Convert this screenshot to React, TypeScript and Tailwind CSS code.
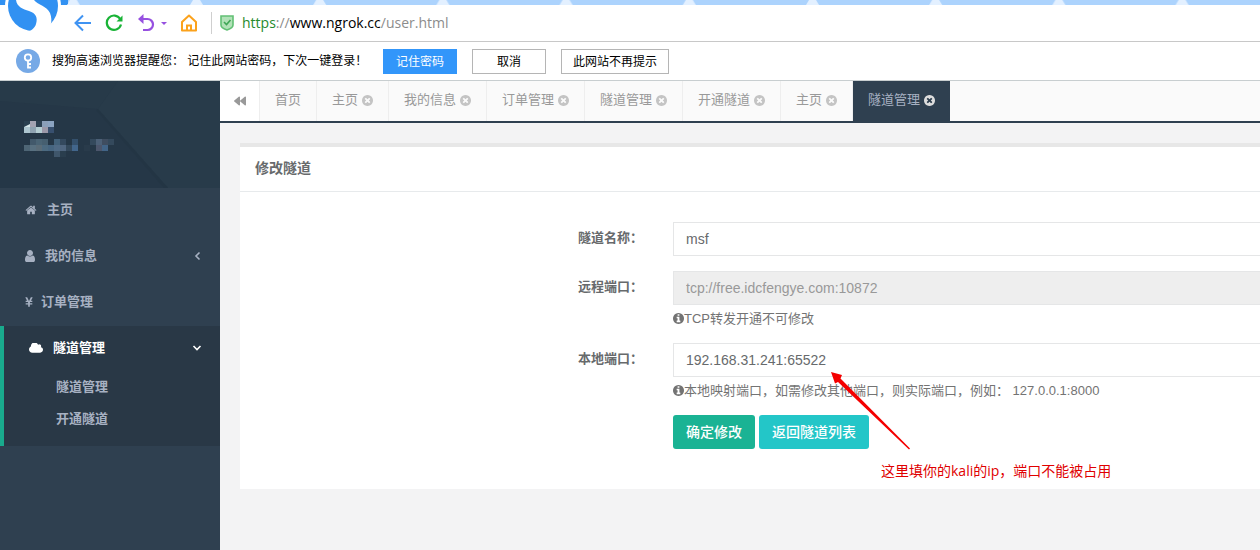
import React from 'react';
import { FaBackward, FaYenSign } from 'react-icons/fa';

const iconPaths = {
  home: 'M1472 992v480q0 26-19 45t-45 19h-384v-384h-256v384h-384q-26 0-45-19t-19-45v-480q0-1 .5-3t.5-3l575-474 575 474q1 2 1 6zm223-69l-62 74q-8 9-21 11h-3q-13 0-21-7l-692-577-692 577q-12 8-24 7-13-2-21-11l-62-74q-8-10-7-23.5t11-21.5l719-599q32-26 76-26t76 26l244 204v-195q0-14 9-23t23-9h192q14 0 23 9t9 23v408l219 182q10 8 11 21.5t-7 23.5z',
  user: 'M1536 1399q0 109-62.5 187t-150.5 78h-854q-88 0-150.5-78t-62.5-187q0-85 8.5-160.5t31.5-152 58.5-131 94-89 134.5-34.5q131 128 313 128t313-128q76 0 134.5 34.5t94 89 58.5 131 31.5 152 8.5 160.5zm-256-887q0 159-112.5 271.5t-271.5 112.5-271.5-112.5-112.5-271.5 112.5-271.5 271.5-112.5 271.5 112.5 112.5 271.5z',
  cloud: 'M1984 1152q0 159-112.5 271.5t-271.5 112.5h-1088q-185 0-316.5-131.5t-131.5-316.5q0-132 71-241.5t187-163.5q-2-28-2-43 0-212 150-362t362-150q158 0 286.5 88t187.5 230q70-62 166-62 106 0 181 75t75 181q0 75-41 138 129 30 213 134.5t84 239.5z',
  close: 'M1277 1122q0-26-19-45l-181-181 181-181q19-19 19-45 0-27-19-46l-90-90q-19-19-46-19-26 0-45 19l-181 181-181-181q-19-19-45-19-27 0-46 19l-90 90q-19 19-19 46 0 26 19 45l181 181-181 181q-19 19-19 45 0 27 19 46l90 90q19 19 46 19 26 0 45-19l181-181 181 181q19 19 45 19 27 0 46-19l90-90q19-19 19-46zm387-226q0 209-103 385.5t-279.5 279.5-385.5 103-385.5-103-279.5-279.5-103-385.5 103-385.5 279.5-279.5 385.5-103 385.5 103 279.5 279.5 103 385.5z',
  info: 'M1152 1376v-160q0-14-9-23t-23-9h-96v-512q0-14-9-23t-23-9h-320q-14 0-23 9t-9 23v160q0 14 9 23t23 9h96v320h-96q-14 0-23 9t-9 23v160q0 14 9 23t23 9h448q14 0 23-9t9-23zm-128-896v-160q0-14-9-23t-23-9h-192q-14 0-23 9t-9 23v160q0 14 9 23t23 9h192q14 0 23-9t9-23zm640 416q0 209-103 385.5t-279.5 279.5-385.5 103-385.5-103-279.5-279.5-103-385.5 103-385.5 279.5-279.5 385.5-103 385.5 103 279.5 279.5 103 385.5z',
};

const Icon: React.FC<{ name: keyof typeof iconPaths; viewBox?: string; className?: string }> = ({
  name,
  viewBox = '128 128 1536 1536',
  className,
}) => (
  <svg viewBox={viewBox} fill="currentColor" aria-hidden="true" className={className}>
    <path d={iconPaths[name]} />
  </svg>
);

const tabs = [
  { title: '首页', closable: false },
  { title: '主页', closable: true },
  { title: '我的信息', closable: true },
  { title: '订单管理', closable: true },
  { title: '隧道管理', closable: true },
  { title: '开通隧道', closable: true },
  { title: '主页', closable: true },
  { title: '隧道管理', closable: true, active: true },
];

// pixelated account name: x, y, colour of each 6px cell
const maskCells: [number, number, string][] = [
  [0, 0, '#2a3f50'], [1, 0, '#a3a3b3'], [2, 0, '#2c4052'], [3, 0, '#8b9fb9'], [4, 0, '#8ba3c1'],
  [0, 1, '#adc5cf'], [1, 1, '#8fa3b2'], [2, 1, '#b4cdd3'], [3, 1, '#9b98a8'], [4, 1, '#38506f'],
  [1, 3, '#42596b'], [2, 3, '#4a6475'], [3, 3, '#465f70'], [5, 3, '#42617a'], [6, 3, '#34495e'], [8, 3, '#34506c'],
  [11, 3, '#34495c'], [12, 3, '#4c6077'], [13, 3, '#3f4d60'], [14, 3, '#34495c'],
  [0, 4, '#4e6575'], [1, 4, '#587080'], [2, 4, '#5a6c78'], [3, 4, '#4c6a80'], [4, 4, '#466580'], [5, 4, '#4f6a85'],
  [6, 4, '#506680'], [7, 4, '#34495c'], [8, 4, '#42668c'], [10, 4, '#293b4b'], [12, 4, '#4c566c'], [13, 4, '#426487'],
  [5, 5, '#3f566b'], [6, 5, '#2a3e4e'],
];

const Logo = () => (
  <svg viewBox="0 0 68 34" className="absolute top-0 left-0 h-[34px] w-[68px]" aria-hidden="true">
    <path d="M0 0h70l-3 5H0z" fill="#3191f2" />
    <circle cx="33" cy="6" r="28" fill="#fff" />
    <circle cx="33" cy="6" r="25" fill="#3191f2" />
    <path d="M16 0C17 7 23 9 29 11C36 13 38 18 36 24C35 28 31 31 26 33H44C51 29 53 21 50 13C47 6 38 5 34 0Z" fill="#fff" />
  </svg>
);

const BrowserBar = () => (
  <header className="relative border-b border-[#c8c8c8]">
    <svg className="block h-[5px] w-full bg-[#acd3fd]" aria-hidden="true">
      <defs>
        <pattern id="tab-gaps" x="190" width="123.2" height="5" patternUnits="userSpaceOnUse">
          <path d="M3 0h7l3 5H0z" fill="#e3f0ff" />
        </pattern>
      </defs>
      <rect width="100%" height="5" fill="url(#tab-gaps)" />
    </svg>
    <Logo />
    <div className="flex h-9 items-center pl-[74px]">
      <button type="button" aria-label="后退" className="w-[31px]">
        <svg viewBox="0 0 18 18" className="size-[18px]" fill="none" stroke="#3f93f2" strokeWidth="2">
          <path d="M17 9H2M9 1.5L1.5 9L9 16.5" />
        </svg>
      </button>
      <button type="button" aria-label="刷新" className="w-8">
        <svg viewBox="0 0 18 18" className="size-[18px]" fill="none" stroke="#19b336" strokeWidth="2.2">
          <path d="M15.2 5A7.2 7.2 0 1 0 16 10.5" />
          <path d="M17.5 1.5V7.5H11.5Z" fill="#19b336" stroke="none" />
        </svg>
      </button>
      <button type="button" aria-label="恢复" className="flex w-[43px] items-center gap-1.5">
        <svg viewBox="0 0 18 18" className="size-[18px]" fill="none" stroke="#9650e0" strokeWidth="2.2">
          <path d="M3 5H10.5A5.5 5.5 0 0 1 10.5 16H6" />
          <path d="M6.5 0V10L1 5Z" fill="#9650e0" stroke="none" />
        </svg>
        <svg viewBox="0 0 6 3" className="h-[3px] w-1.5" fill="#9650e0">
          <path d="M0 0h6L3 3z" />
        </svg>
      </button>
      <button type="button" aria-label="主页" className="w-[31px]">
        <svg viewBox="0 0 18 18" className="size-[18px]" fill="none" stroke="#fba21c" strokeWidth="2">
          <path d="M2 8L9 1.5L16 8V16.5H2Z" strokeLinejoin="round" />
          <path d="M7 16V11.500H11V16" />
        </svg>
      </button>
      <div className="h-[22px] border-l border-[#cfcfcf]" />
      <svg viewBox="0 0 14 16" className="ml-2 h-4 w-3.5" aria-hidden="true">
        <path d="M1 1H13V10Q13 13 7 15Q1 13 1 10Z" fill="#b2e2b8" stroke="#61c074" strokeWidth="1.6" />
        <path d="M4 7L6.5 9.5L10.5 5" fill="none" stroke="#3fa656" strokeWidth="1.6" />
      </svg>
      <div className="ml-2 font-['Open_Sans',sans-serif] text-sm text-[#8c8c8c]">
        <span className="text-[#258a2c]">https</span>://<span className="text-black">www.ngrok.cc</span>/user.html
      </div>
    </div>
  </header>
);

const PasswordBar = () => (
  <div className="flex h-[39px] items-center border-b border-[#c8ced0] pl-4 text-xs text-black">
    <svg viewBox="0 0 24 24" className="size-6" aria-hidden="true">
      <circle cx="12" cy="12" r="12" fill="#76a9e6" />
      <circle cx="12" cy="8.5" r="3.2" fill="none" stroke="#fff" strokeWidth="1.8" />
      <path d="M12 11.5V19.5M12 15H15M12 18.5H15" stroke="#fff" strokeWidth="1.8" />
    </svg>
    <p className="ml-3 w-[331px] whitespace-pre">搜狗高速浏览器提醒您： 记住此网站密码，下次一键登录！</p>
    <button type="button" className="h-[25px] w-[74px] bg-[#3296fa] pt-px text-white">记住密码</button>
    <button type="button" className="ml-[15px] h-[25px] w-[74px] border border-[#b5b5b5] pt-px">取消</button>
    <button type="button" className="ml-[15px] h-[25px] w-[108px] border border-[#b5b5b5] pt-px">此网站不再提示</button>
  </div>
);

const Chevron: React.FC<{ open?: boolean }> = ({ open }) => (
  <svg viewBox="0 0 10 10" className="ml-auto size-2.5" fill="none" stroke="currentColor" strokeWidth="1.6" aria-hidden="true">
    <path d={open ? 'M1.500 3L5 6.500L8.500 3' : 'M7.500 1.500L4 5L7.500 8.500'} />
  </svg>
);

const Sidebar = () => (
  <nav className="w-[220px] shrink-0 bg-[#2f4050] text-[13px] font-semibold text-[#a7b1c2]">
    <svg viewBox="0 0 220 107" className="block h-[107px] w-[220px] bg-[#253747]" aria-hidden="true">
      <path d="M0 0H118L98 28L0 20Z" fill="#273a49" />
      <path d="M118 0H220V107H168L98 28Z" fill="#283b4a" />
      <path d="M98 28L168 107H164L96 29Z" fill="#233544" />
      {maskCells.map(([x, y, fill]) => (
        <rect key={`${x}-${y}`} x={24 + x * 6} y={40 + y * 6} width="6" height="6" fill={fill} />
      ))}
      <path d="M24 46L30 43V46Z" fill="#d5e5e9" />
    </svg>
    <ul>
      <li>
        <a href="#home" className="flex h-[46px] items-center pb-0.5 pl-[25px]">
          <Icon name="home" viewBox="0 128 1792 1536" className="mr-2.5 h-3 w-3" />主页
        </a>
      </li>
      <li>
        <a href="#profile" className="flex h-[46px] items-center pr-[18px] pb-0.5 pl-[25px]">
          <Icon name="user" viewBox="256 128 1280 1536" className="mr-2.5 h-3 w-2.5" />我的信息
          <Chevron />
        </a>
      </li>
      <li>
        <a href="#orders" className="flex h-[46px] items-center pb-0.5 pl-[25px]">
          <FaYenSign className="mr-2 h-3 w-2" />订单管理
        </a>
      </li>
      <li className="border-l-4 border-[#19aa8d] bg-[#293846] pb-2.5">
        <a href="#tunnels" className="flex h-[46px] items-center pr-[18px] pb-0.5 pl-[25px] text-white">
          <Icon name="cloud" viewBox="64 256 1920 1280" className="mr-2.5 h-2.5 w-3.5" />隧道管理
          <Chevron open />
        </a>
        <ul>
          <li><a href="#tunnel-list" className="flex h-8 items-center pb-0.5 pl-[52px]">隧道管理</a></li>
          <li><a href="#tunnel-new" className="flex h-8 items-center pb-0.5 pl-[52px]">开通隧道</a></li>
        </ul>
      </li>
    </ul>
  </nav>
);

const TabBar = () => (
  <div className="flex h-[42px] border-b-2 border-[#2f4050] bg-[#fafafa] text-[13px] text-[#999]">
    <button type="button" aria-label="向左滚动" className="flex w-10 items-center justify-center border-r border-[#eee] bg-white">
      <FaBackward className="size-3" />
    </button>
    {tabs.map((tab, i) => (
      <div
        key={i}
        className={
          tab.active
            ? 'flex items-center gap-1 bg-[#2f4050] px-[15px] pb-0.5 text-[#a7b1c2]'
            : 'flex items-center gap-1 border-r border-[#eee] px-[15px] pb-0.5'
        }
      >
        <a href={`#tab-${i}`}>{tab.title}</a>
        {tab.closable && (
          <button type="button" aria-label="关闭" className={tab.active ? 'text-[#ddd]' : 'text-[#c4c4c4]'}>
            <Icon name="close" className="block size-[11px]" />
          </button>
        )}
      </div>
    ))}
  </div>
);

interface FieldProps {
  id: string;
  label: string;
  value: string;
  disabled?: boolean;
  help?: string;
}

const Field: React.FC<FieldProps> = ({ id, label, value, disabled, help }) => (
  <div className="mb-[15px] flex">
    <label htmlFor={id} className="w-[433px] shrink-0 pt-1.5 pr-[30px] text-right leading-5 font-bold">{label}</label>
    <div className="flex-1">
      <input
        id={id}
        defaultValue={value}
        disabled={disabled}
        className="block h-[34px] w-full border border-r-0 border-[#e5e6e7] px-3 text-sm disabled:bg-[#eee] disabled:text-[#999]"
      />
      {help && (
        <p className="mt-1 flex h-[19px] items-center whitespace-pre text-[#737373]">
          <Icon name="info" className="size-[11px]" />{help}
        </p>
      )}
    </div>
  </div>
);

const TunnelForm = () => (
  <section className="relative mt-5 ml-5 border-t-4 border-[#e7e7e7] bg-white text-[#676a6c]">
    <h5 className="border-b border-[#e7eaec] px-[15px] pt-[11px] pb-[13px] text-sm leading-5 font-semibold">修改隧道</h5>
    <form className="pt-[30px] pb-10" onSubmit={(e) => e.preventDefault()}>
      <Field id="name" label="隧道名称：" value="msf" />
      <Field id="remote" label="远程端口：" value="tcp://free.idcfengye.com:10872" disabled help="TCP转发开通不可修改" />
      <Field
        id="local"
        label="本地端口："
        value="192.168.31.241:65522"
        help="本地映射端口，如需修改其他端口，则实际端口，例如： 127.0.0.1:8000"
      />
      <div className="ml-[433px] flex gap-1 text-sm font-medium text-white">
        <button type="submit" className="h-[34px] rounded-[3px] bg-[#1ab394] px-[13px]">确定修改</button>
        <button type="button" className="h-[34px] rounded-[3px] bg-[#23c6c8] px-[13px]">返回隧道列表</button>
      </div>
    </form>

    {/* arrow and note laid over the form */}
    <svg viewBox="0 0 80 80" className="absolute top-[224px] left-[591px] size-20" aria-hidden="true">
      <path d="M0 1L11 4L9.500 7.500L79 77.500L78 78.500L7 11L4 12.500Z" fill="#f40000" />
    </svg>
    <p className="absolute top-[314px] left-[641px] font-['Open_Sans','Noto_Sans_CJK_SC',sans-serif] text-sm whitespace-nowrap text-[#e00000]">
      这里填你的kali的ip，端口不能被占用
    </p>
  </section>
);

const App: React.FC = () => {
  return (
    <div className="flex min-h-screen flex-col bg-white font-['Liberation_Sans','Noto_Sans_CJK_SC',sans-serif]">
      <BrowserBar />
      <PasswordBar />
      <div className="flex flex-1">
        <Sidebar />
        <main className="min-w-0 flex-1 bg-[#f3f3f4] text-[13px]">
          <TabBar />
          <TunnelForm />
        </main>
      </div>
    </div>
  );
};

export default App;
